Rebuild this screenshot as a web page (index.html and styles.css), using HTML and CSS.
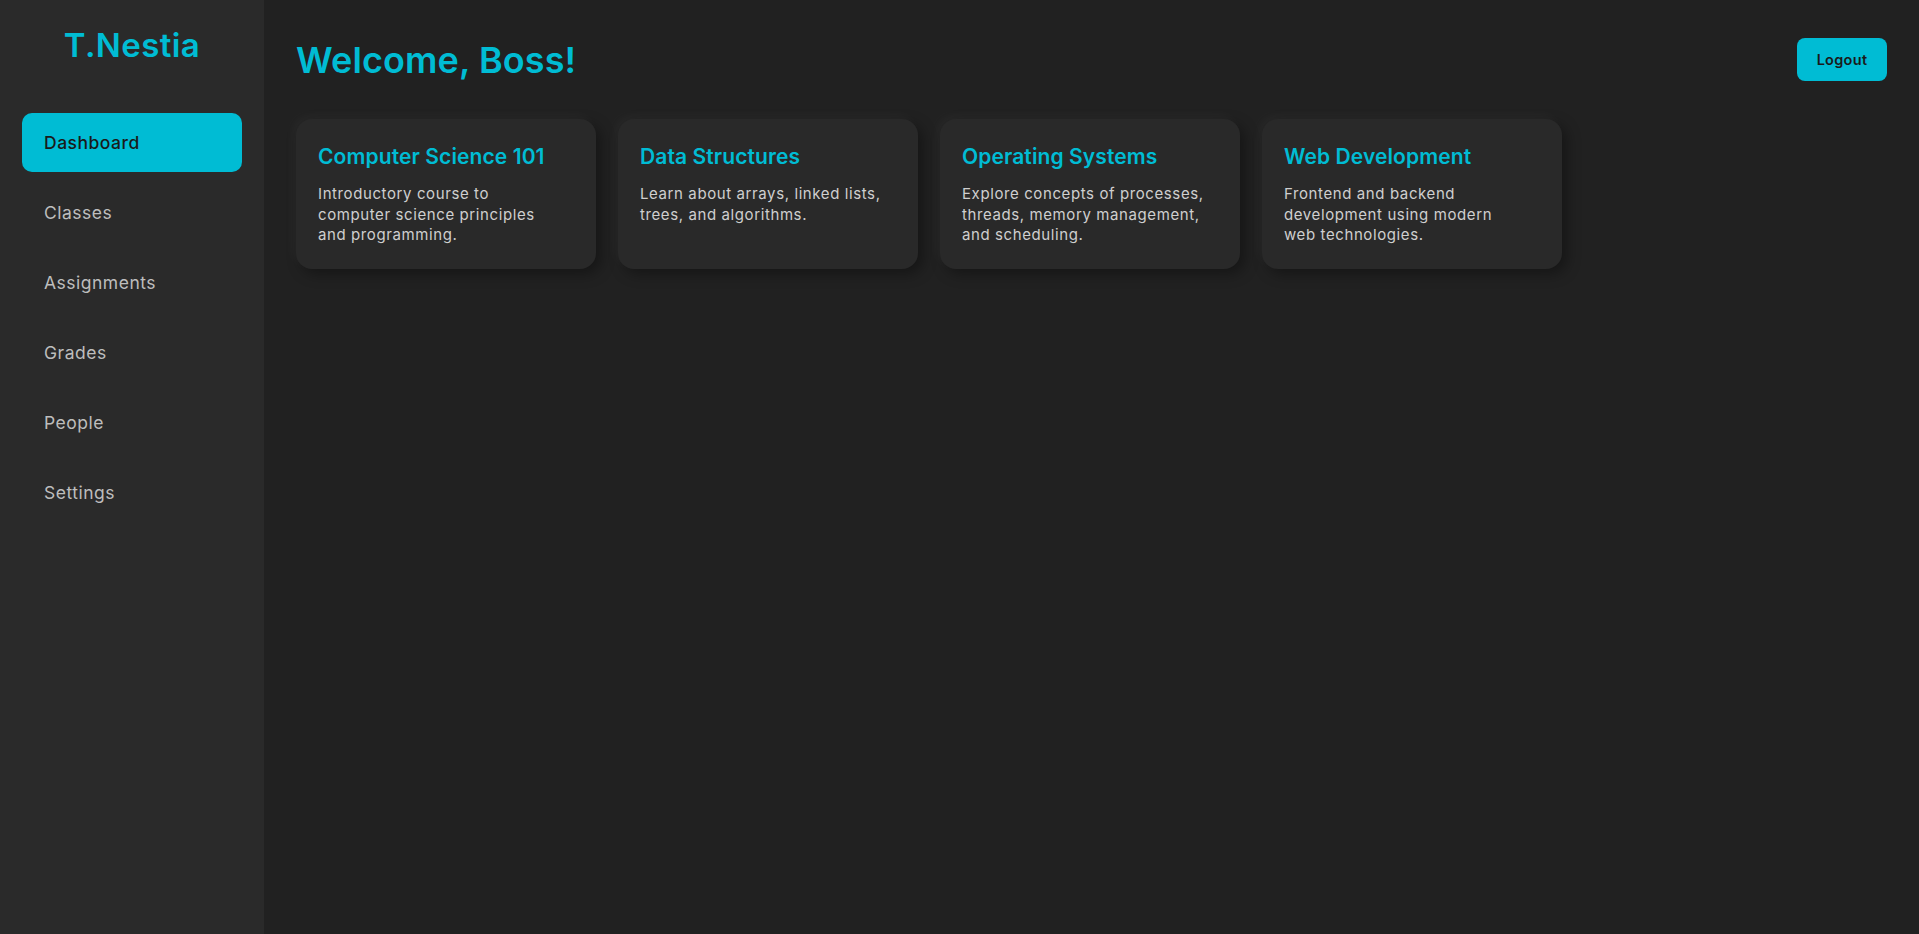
FILE: index.html
```html
<!DOCTYPE html>
<html lang="en">
<head>
<meta charset="utf-8">
<title>T.Nestia Dashboard</title>
<link rel="stylesheet" href="styles.css">
</head>
<body>
<div class="app">
  <aside class="sidebar">
    <div class="logo">T.Nestia</div>
    <nav class="nav">
      <a class="nav-item active" href="#">Dashboard</a>
      <a class="nav-item" href="#">Classes</a>
      <a class="nav-item" href="#">Assignments</a>
      <a class="nav-item" href="#">Grades</a>
      <a class="nav-item" href="#">People</a>
      <a class="nav-item" href="#">Settings</a>
    </nav>
  </aside>
  <main class="main">
    <header class="header">
      <h1 class="welcome">Welcome, Boss!</h1>
      <button class="logout">Logout</button>
    </header>
    <section class="cards">
      <div class="card">
        <h3 class="card-title">Computer Science 101</h3>
        <p class="card-text">Introductory course to computer science principles and programming.</p>
      </div>
      <div class="card">
        <h3 class="card-title">Data Structures</h3>
        <p class="card-text">Learn about arrays, linked lists, trees, and algorithms.</p>
      </div>
      <div class="card">
        <h3 class="card-title">Operating Systems</h3>
        <p class="card-text">Explore concepts of processes, threads, memory management, and scheduling.</p>
      </div>
      <div class="card">
        <h3 class="card-title">Web Development</h3>
        <p class="card-text">Frontend and backend development using modern web technologies.</p>
      </div>
    </section>
  </main>
</div>
</body>
</html>
```

FILE: styles.css
```css
* { box-sizing: border-box; }
html, body { margin: 0; padding: 0; height: 100%; }
body {
  font-family: "Inter", "Noto Sans", sans-serif;
  background: #212121;
  color: #d0d0d0;
}
.app {
  display: flex;
  min-height: 934px;
}
.sidebar {
  width: 264px;
  flex-shrink: 0;
  background: #2a2a2a;
  padding: 23px 22px;
}
.logo {
  text-align: center;
  color: #00bcd4;
  font-size: 33px;
  font-weight: 600;
  line-height: 44px;
  letter-spacing: 0.4px;
  margin-bottom: 46px;
}
.nav {
  display: flex;
  flex-direction: column;
  gap: 11px;
}
.nav-item {
  display: block;
  height: 59px;
  padding: 0 22px;
  line-height: 59px;
  border-radius: 10px;
  color: #bdbdbd;
  text-decoration: none;
  font-size: 17.5px;
  font-weight: 400;
  letter-spacing: 0.5px;
}
.nav-item.active {
  background: #00bcd4;
  color: #1a1a1a;
  font-weight: 500;
}
.main {
  flex: 1;
  padding: 32px 32px;
}
.header {
  display: flex;
  justify-content: space-between;
  align-items: center;
  height: 55px;
  margin-bottom: 32px;
}
.welcome {
  margin: 0;
  padding-top: 2px;
  color: #00bcd4;
  font-size: 36px;
  font-weight: 600;
  line-height: 55px;
  letter-spacing: 0.1px;
}
.logout {
  background: #00bcd4;
  color: #1a1a1a;
  border: none;
  border-radius: 8px;
  width: 90px;
  height: 43px;
  padding: 0;
  font-family: inherit;
  font-size: 14.5px;
  font-weight: 600;
  letter-spacing: 0.3px;
}
.cards {
  display: flex;
  gap: 22px;
}
.card {
  width: 300px;
  height: 150px;
  background: #292929;
  border-radius: 16px;
  padding: 23px 22px 20px;
  box-shadow: 5px 5px 14px rgba(0, 0, 0, 0.35), -4px -4px 12px rgba(255, 255, 255, 0.035);
}
.card-title {
  margin: 0 0 12px;
  color: #00bcd4;
  font-size: 21px;
  font-weight: 600;
  line-height: 30px;
  letter-spacing: 0.1px;
}
.card-text {
  margin: 0;
  padding-right: 14px;
  font-size: 15px;
  line-height: 20.5px;
  letter-spacing: 0.6px;
  color: #cfcfcf;
}
```
